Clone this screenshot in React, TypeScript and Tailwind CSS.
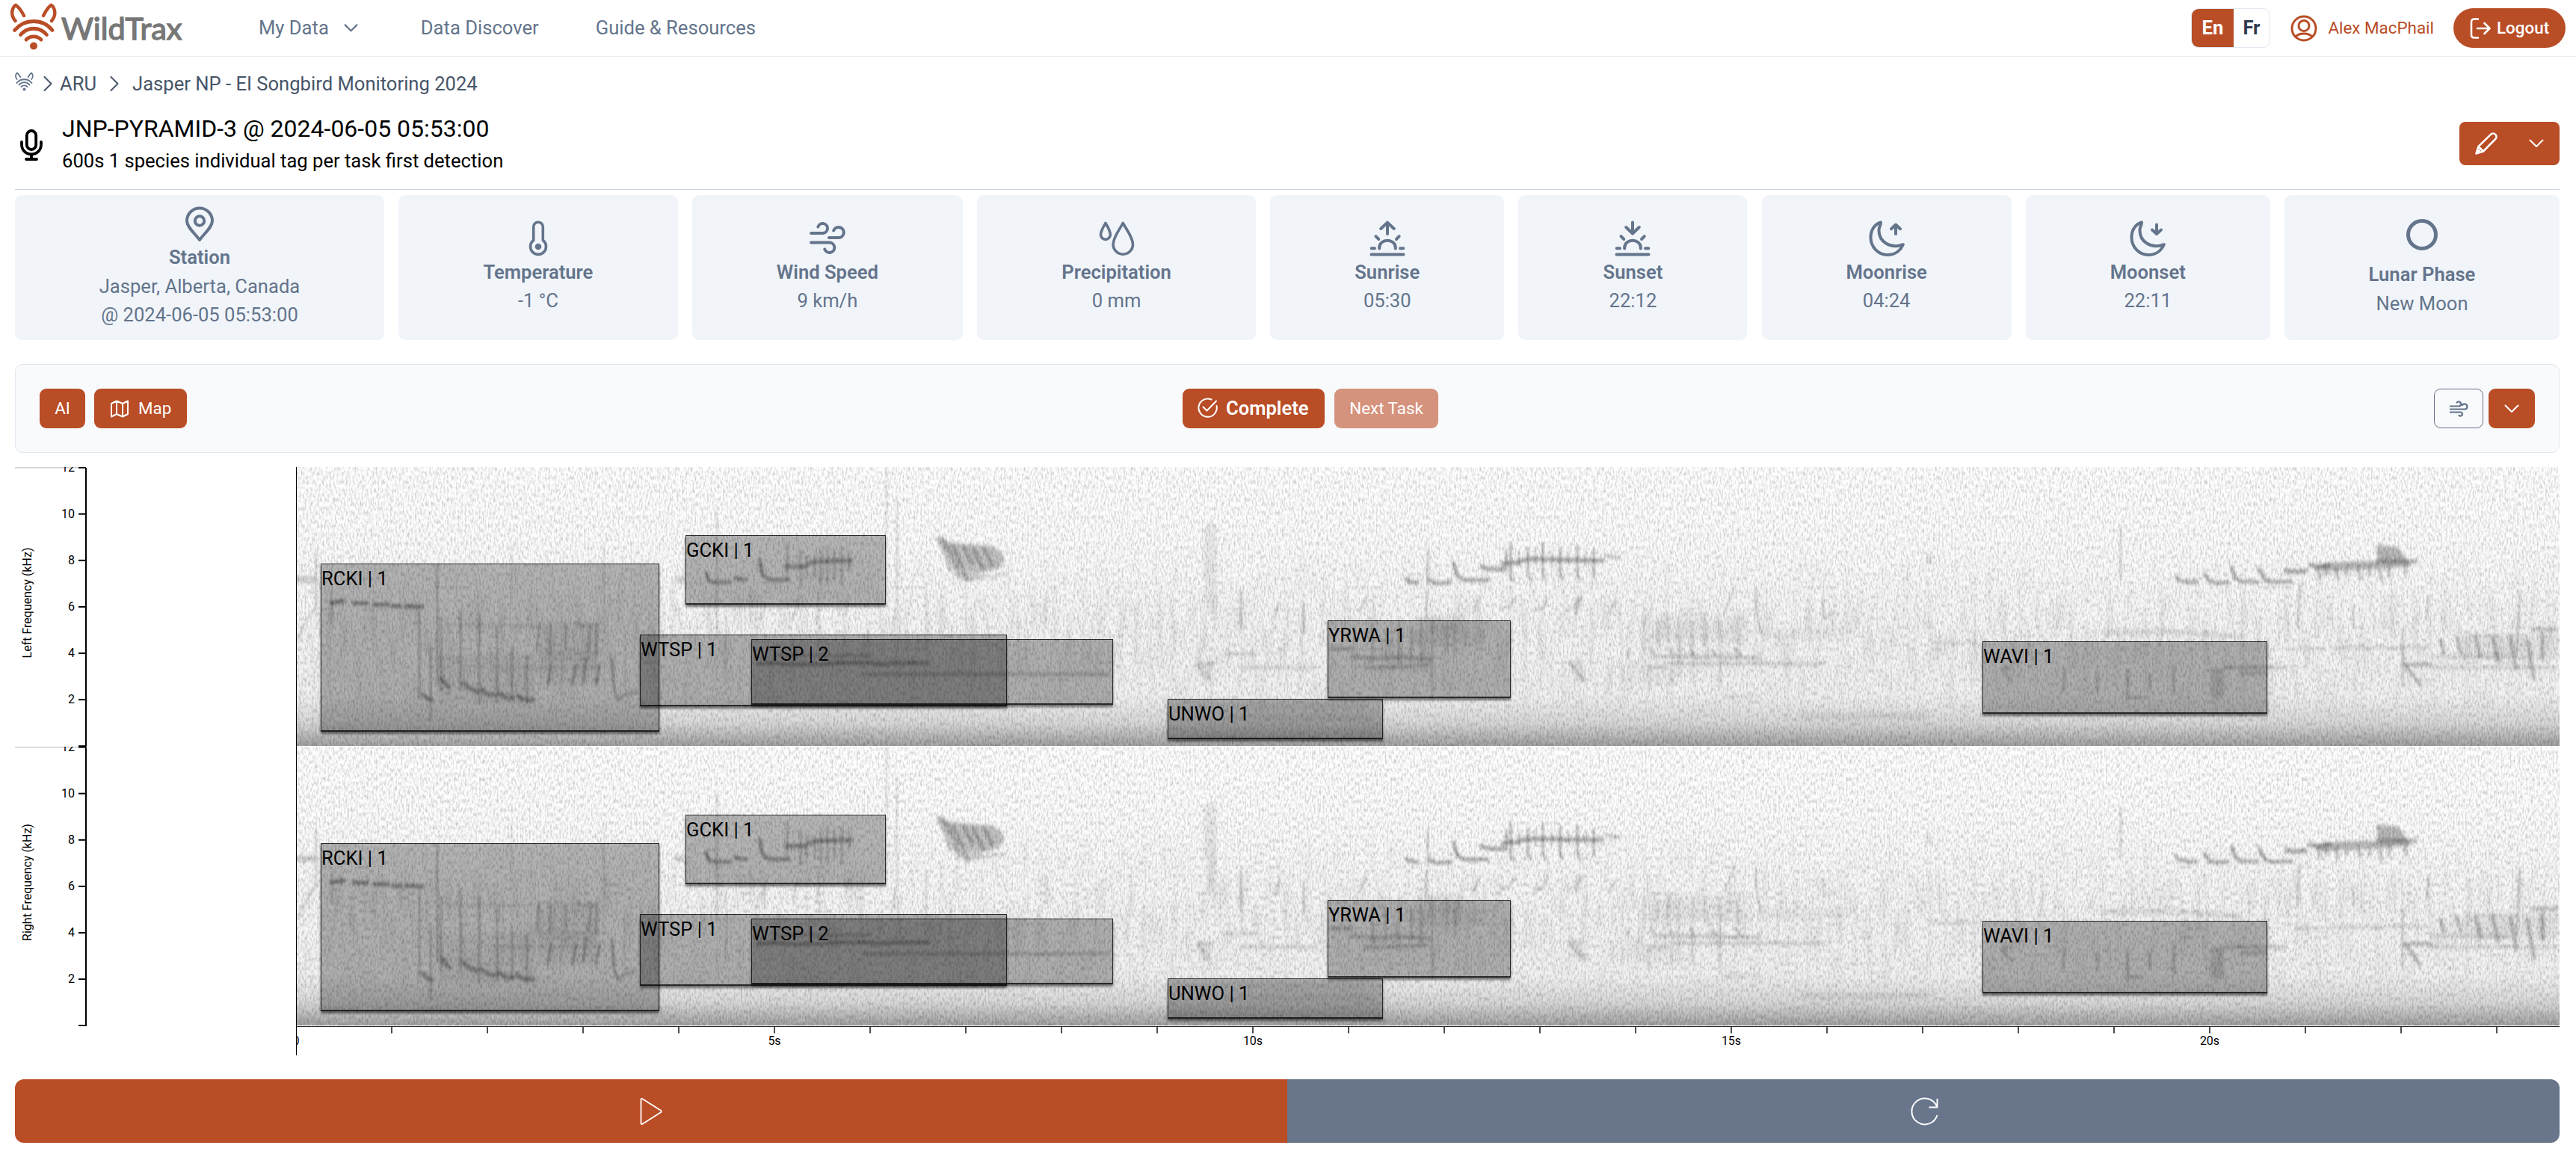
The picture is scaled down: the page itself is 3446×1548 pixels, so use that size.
import React from "react";

type IconProps = { className?: string };

const FoxMark = ({ className }: IconProps) => (
  <svg viewBox="14 3 62 65" className={className} fill="none" stroke="currentColor" strokeWidth="4.4" strokeLinecap="round" strokeLinejoin="round">
    <path d="M20.5 28C17 24 16 20 16.2 16.500C16.500 12 18 8.500 21 6.800C24 9 29 15 32 21" />
    <path d="M69 28C72.500 24 73.500 20 73.300 16.500C73 12 71.500 8.500 68.500 6.800C65.500 9 61 15 58 21" />
    <path d="M19.500 40.500C33 24.500 57 24.500 70 40.500" strokeWidth="4.800" />
    <path d="M27.500 46.500C37 35.500 53 35.500 62.500 46.500" strokeWidth="4.800" />
    <path d="M35 53C40.500 47.500 49.500 47.500 55 53" strokeWidth="4.800" />
    <circle cx="45" cy="61.500" r="5" fill="currentColor" stroke="none" />
  </svg>
);

const Chevron = ({ className, w = 2.6 }: IconProps & { w?: number }) => (
  <svg viewBox="0 0 20 12" className={className} fill="none" stroke="currentColor" strokeWidth={w} strokeLinecap="round" strokeLinejoin="round">
    <path d="M1.500 1.500L10 10L18.500 1.500" />
  </svg>
);

const ChevronRight = ({ className }: IconProps) => (
  <svg viewBox="0 0 12 20" className={className} fill="none" stroke="currentColor" strokeWidth="2" strokeLinecap="round" strokeLinejoin="round">
    <path d="M1.500 1L10.500 10L1.500 19" />
  </svg>
);

const Glyph = ({ children, className = "size-12" }: { children: React.ReactNode; className?: string }) => (
  <svg viewBox="0 0 48 48" className={className} fill="none" stroke="currentColor" strokeWidth="4" strokeLinecap="round" strokeLinejoin="round">
    {children}
  </svg>
);

const moon = <path d="M16 2.500C7.500 5 2.500 13 2.500 22.500C2.500 35.500 12.500 46 25 46C34 46 42 41 45.800 32.200C29 38.500 13 28.500 13.500 12.500C13.700 8.500 16.500 5 16 2.500Z" />;
const horizon = <path d="M2.500 45.500H45.500M13.200 37.500V36.500C13.200 23.500 34.800 23.500 34.800 36.500V37.500M2.700 37.200H7M41 37.200H45.300M8.500 21.200L12.300 25M39.700 21.200L36 25" />;

type Stat = { title: string; lines: string[]; icon: React.ReactNode };

const stats: Stat[] = [
  {
    title: "Station",
    lines: ["Jasper, Alberta, Canada", "@ 2024-06-05 05:53:00"],
    icon: (
      <Glyph>
        <path d="M24 45C17 35.500 7 28 7 19.500A17 17 0 0 1 41 19.500C41 28 31 35.500 24 45Z" />
        <circle cx="24" cy="19.500" r="6.200" />
      </Glyph>
    ),
  },
  {
    title: "Temperature",
    lines: ["-1 °C"],
    icon: (
      <Glyph>
        <path d="M17.700 8.500a6.300 6.300 0 0 1 12.600 0V26.500a10.500 10.500 0 1 1 -12.600 0Z" strokeWidth="3.600" />
        <circle cx="24" cy="35" r="4.300" fill="currentColor" stroke="none" />
      </Glyph>
    ),
  },
  {
    title: "Wind Speed",
    lines: ["9 km/h"],
    icon: (
      <Glyph>
        <path d="M2 17H17.500a6.500 6.500 0 1 0 -6.200 -8.500M26 23H38.500a7 7 0 1 0 -6.300 -9.500M2 29.500H26.500a6.700 6.700 0 1 1 -6.200 9" />
      </Glyph>
    ),
  },
  {
    title: "Precipitation",
    lines: ["0 mm"],
    icon: (
      <Glyph>
        <path d="M9 3.500C12 8.500 15.300 14 15.300 19a6.400 6.400 0 0 1 -12.800 0C2.500 14 6 8.500 9 3.500Z" strokeWidth="3.600" />
        <path d="M32.200 3.500C37.500 13 45.500 23 45.500 32a13.200 13.200 0 0 1 -26.400 0C19.100 23 27 13 32.200 3.500Z" strokeWidth="3.600" />
      </Glyph>
    ),
  },
  {
    title: "Sunrise",
    lines: ["05:30"],
    icon: (
      <Glyph>
        {horizon}
        <path d="M24 18V3M15.200 11L24 2.700L32.800 11" />
      </Glyph>
    ),
  },
  {
    title: "Sunset",
    lines: ["22:12"],
    icon: (
      <Glyph>
        {horizon}
        <path d="M24 2.500V17M15.200 9L24 17.500L32.800 9" />
      </Glyph>
    ),
  },
  {
    title: "Moonrise",
    lines: ["04:24"],
    icon: (
      <Glyph>
        {moon}
        <path d="M36 18V7M30 11.200L36 5.500L42 11.200" />
      </Glyph>
    ),
  },
  {
    title: "Moonset",
    lines: ["22:11"],
    icon: (
      <Glyph>
        {moon}
        <path d="M36 5.500V16M30 12.500L36 18L42 12.500" />
      </Glyph>
    ),
  },
  {
    title: "Lunar Phase",
    lines: ["New Moon"],
    icon: (
      <Glyph className="size-12 mb-2.5">
        <circle cx="24" cy="24" r="18.500" strokeWidth="5" />
      </Glyph>
    ),
  },
];

/* Tag regions: left, top, width and height inside a spectrogram panel. */
const tags = [
  { label: "RCKI | 1", left: 33, top: 129, width: 453, height: 225 },
  { label: "WTSP | 1", left: 460, top: 224, width: 491, height: 96 },
  { label: "GCKI | 1", left: 521, top: 91, width: 268, height: 93 },
  { label: "WTSP | 2", left: 609, top: 230, width: 484, height: 88 },
  { label: "UNWO | 1", left: 1166, top: 310, width: 288, height: 54 },
  { label: "YRWA | 1", left: 1380, top: 205, width: 245, height: 104 },
  { label: "WAVI | 1", left: 2256, top: 233, width: 381, height: 97 },
];

/* Bird calls: path, stroke width, opacity. Closed shapes are filled. */
const calls: [string, number, number][] = [
  ["M45 182L66 179M75 182H97M103 184H125M127 186H142M145 186L171 187", 4, 0.5],
  ["M48 165V210M60 180V172M2 230L14 205L24 190M27 110V190", 2, 0.22],
  ["M165 190V310M180 240V340M189 130V290M194 200V300M220 190V300M245 200V318M269 215V315M289 240V310M309 250V318", 2, 0.3],
  ["M194 282L200 290L206 296M222 287L232 296L244 301M246 297L256 304L268 306M270 302L280 308L292 310M294 304L302 310L320 312M168 303L176 310L184 312", 5, 0.36],
  ["M325 208L322 248M361 210V245M395 210L391 248M402 208V250M378 205V212H404M340 205V250", 2.5, 0.25],
  ["M341 263L337 293M375 263L369 293M407 263L401 292M422 255L426 300L431 312L440 304L456 301M388 255L384 290", 2.5, 0.36],
  ["M323 249H408M330 257H400M262 268H408M200 212H320", 4, 0.1],
  ["M325 208H405V290H325Z", 2, 0.05],
  ["M190 250H320V315H190Z", 2, 0.05],
  ["M412 100V250M288 100V190M462 220L458 290M355 180V310M480 200V290M440 220V300", 1.5, 0.16],
  ["M0 150H26M508 150H519", 8, 0.18],
  ["M548 140L552 152L560 154L583 154M586 146L592 150L604 151M620 122L624 145L634 151H661", 4, 0.4],
  ["M653 133H684M684 129L699 126M700 126L745 125", 5, 0.36],
  ["M675 110V160M683 118V150M694 118V150M702 110V155M711 105V158M720 112V150M730 108V158M657 100V150M740 112V140", 2.5, 0.24],
  ["M563 60V230M608 165V210M628 180L622 205M672 175L664 205M740 175L734 200M700 165L696 210", 2, 0.2],
  ["M790 0V90M804 40V185L795 225M843 165V225M1003 175V210M575 190V290M700 190V225", 1.6, 0.2],
  ["M858 94L870 120L876 140M864 94L876 122L884 142M868 100L882 130L888 150M878 104L894 140L898 152M892 105L906 130M905 108L920 138M920 108L932 132", 5, 0.22],
  ["M858 92L872 100L910 104L930 105L942 112L948 124L940 136L912 142L884 132Z", 4, 0.24],
  ["M874 128L900 138L922 146L902 152L894 152L884 138Z", 4, 0.16],
  ["M895 152L925 147L950 143", 3, 0.18],
  ["M616 264L640 262L660 264H700L720 262H770L780 264L800 262L848 262", 3.5, 0.4],
  ["M757 277H1088M640 252H770", 3.5, 0.24],
  ["M1204 262L1214 275L1224 286M1204 263H1228M1262 268H1366M1240 250H1285M1702 261L1712 272L1724 286M1702 261H1722", 3.5, 0.17],
  ["M1204 262H1228L1222 288H1214Z", 2, 0.07],
  ["M1702 262H1720L1730 288H1714Z", 2, 0.07],
  ["M1411 253L1440 256L1480 254L1519 257M1428 268H1470L1515 265M1382 243H1415", 4, 0.24],
  ["M1440 210V262M1458 215V262M1475 200V265M1492 215V262M1505 200V262M1520 200V310M1540 205V250M1550 210V255", 3, 0.16],
  ["M1515 208H1560", 22, 0.06],
  ["M1490 228H1590", 22, 0.06],
  ["M1216 80V150", 6, 0.05],
  ["M1225 75V195", 14, 0.07],
  ["M1264 165V218M1315 180L1310 200M1348 180V225M1432 173L1422 195M1513 165L1511 210M1514 110V160M1583 175L1575 195", 2.2, 0.28],
  ["M1631 174L1624 186L1610 190M1674 175L1668 188L1655 192M1716 174L1710 188L1700 192M1766 178L1756 196M1720 172L1712 196", 2.4, 0.26],
  ["M1485 148L1488 153L1502 155M1515 150L1525 156L1546 154M1548 127L1554 146L1562 151H1596", 4, 0.4],
  ["M1584 132L1592 136L1620 137M1612 130L1622 128H1638M1634 126L1650 123L1750 125", 5, 0.36],
  ["M1619 110V135M1625 100V150L1630 152M1648 108V145L1653 152M1668 102V145L1673 152M1691 106V145L1696 150M1714 104V145L1720 152M1736 110V148M1750 118L1772 122", 3, 0.3],
  ["M1636 112V132M1658 110V132M1680 112V132M1702 112V132M1725 112V132", 2.5, 0.2],
  ["M1782 245V253M1811 241L1817 253M1838 243L1843 253M1865 244L1871 254M1893 244L1902 254M1926 244L1934 254M1817 253L1960 255", 3.5, 0.24],
  ["M1838 263H2046M1810 268H1835", 3, 0.22],
  ["M1803 200V245M1822 205V240M1835 195V240M1850 200V280M1868 205V290M1885 200V240M1905 205V295M1930 195V240M1810 265V305M1840 265V290M1760 262V290M1775 265V290", 3, 0.11],
  ["M1953 162V190L1960 225M2043 175V200L2060 194M2183 115V130M2187 122V130M2441 80V150M1910 195L1925 160", 2.2, 0.22],
  ["M1800 215H1945", 40, 0.03],
  ["M1815 218H1930", 26, 0.03],
  ["M1780 275H1850", 34, 0.03],
  ["M1960 222H2080", 16, 0.04],
  ["M2012 333H2183", 9, 0.07],
  ["M1910 307H1960M2190 235H2250", 4, 0.1],
  ["M2415 221L2500 220L2604 227", 7, 0.1],
  ["M2514 146L2518 151L2530 154H2544M2552 142L2560 153L2570 155L2586 154M2589 132L2594 148L2602 153L2626 154M2625 135L2634 151L2644 154L2671 153", 4, 0.38],
  ["M2660 138L2672 140L2690 139M2692 131L2705 133L2722 130", 5, 0.38],
  ["M2700 134L2722 128L2750 126H2786V136L2740 138L2712 140Z", 2, 0.28],
  ["M2782 126L2838 126", 6, 0.26],
  ["M2783 104L2812 107L2824 124L2830 132L2790 136L2784 120Z", 3, 0.28],
  ["M2704 135L2708 150M2716 136V146M2728 135L2732 150M2743 136V146M2758 135L2762 150M2774 135V146M2786 130L2790 152M2800 132V148M2822 130V146", 5, 0.2],
  ["M2681 155L2677 215M2853 172L2850 205M2975 165L2970 255M2752 185V215M2818 215V295", 2.2, 0.26],
  ["M2674 243H2715M2720 242L2853 241", 3, 0.18],
  ["M2281 268H2296L2282 270L2296 288M2366 268L2364 300M2410 275V302M2450 270V312M2450 308H2470M2480 275V298M2512 265V305", 4, 0.17],
  ["M2570 268V310", 18, 0.12],
  ["M2578 268H2664M2600 276H2637", 4, 0.2],
  ["M2818 264H2858M2822 266L2832 278L2842 293", 4, 0.3],
  ["M2853 268H3026M2855 254H2960", 3.5, 0.16],
  ["M2868 230L2874 250M2890 226L2896 250M2915 224L2922 255M2938 224L2946 262M2962 226L2970 272M2985 230L2994 285M3005 222V260M2990 217H3026", 5, 0.24],
  ["M2900 240H3026", 34, 0.07],
  ["M1170 320H1430M1240 335H1440", 8, 0.05],
];

const Spectrogram = ({ id, seed }: { id: string; seed: number }) => (
  <svg className="block h-[373px] w-[3028px]" viewBox="0 0 3028 373">
    <defs>
      <linearGradient id={`${id}-floor`} x1="0" y1="0" x2="0" y2="1">
        <stop offset="0" stopColor="#ffffff" />
        <stop offset="0.35" stopColor="#fbfbfb" />
        <stop offset="0.6" stopColor="#f5f5f5" />
        <stop offset="0.82" stopColor="#f2f2f2" />
        <stop offset="0.92" stopColor="#d6d6d6" />
        <stop offset="1" stopColor="#9c9c9c" />
      </linearGradient>
      <linearGradient id={`${id}-band`} x1="0" y1="0" x2="0" y2="1">
        <stop offset="0.25" stopColor="#fff" stopOpacity="0" />
        <stop offset="0.6" stopColor="#fff" stopOpacity="1" />
        <stop offset="0.9" stopColor="#fff" stopOpacity="0.2" />
      </linearGradient>
      <mask id={`${id}-mid`}>
        <rect width="3028" height="373" fill={`url(#${id}-band)`} />
      </mask>
      <filter id={`${id}-grain`} x="0" y="0" width="100%" height="100%" colorInterpolationFilters="sRGB">
        <feTurbulence type="fractalNoise" baseFrequency="0.42 0.17" numOctaves="2" seed={seed} />
        <feColorMatrix values="0 0 0 0 0  0 0 0 0 0  0 0 0 0 0  0.46 0 0 0 -0.185" />
      </filter>
      <filter id={`${id}-light`} x="0" y="0" width="100%" height="100%" colorInterpolationFilters="sRGB">
        <feTurbulence type="fractalNoise" baseFrequency="0.4 0.16" numOctaves="2" seed={seed + 7} />
        <feColorMatrix values="0 0 0 0 1  0 0 0 0 1  0 0 0 0 1  0.9 0 0 0 -0.38" />
      </filter>
      <filter id={`${id}-streaks`} x="0" y="0" width="100%" height="100%" colorInterpolationFilters="sRGB">
        <feTurbulence type="fractalNoise" baseFrequency="0.1 0.018" numOctaves="3" seed={seed + 3} />
        <feColorMatrix values="0 0 0 0 0  0 0 0 0 0  0 0 0 0 0  0.22 0 0 0 -0.09" />
      </filter>
      <filter id={`${id}-soft`} x="-5%" y="-5%" width="110%" height="110%">
        <feGaussianBlur stdDeviation="1.5 1.9" />
      </filter>
    </defs>
    <rect width="3028" height="373" fill={`url(#${id}-floor)`} />
    <g mask={`url(#${id}-mid)`}>
      <rect width="3028" height="373" filter={`url(#${id}-streaks)`} />
    </g>
    <g filter={`url(#${id}-soft)`} stroke="#000" strokeLinejoin="round">
      {calls.map(([d, width, opacity], i) => (
        <path key={i} d={d} fill={d.endsWith("Z") ? "#000" : "none"} fillOpacity={opacity} strokeWidth={width} strokeOpacity={d.endsWith("Z") ? 0 : opacity} />
      ))}
    </g>
    <rect width="3028" height="373" filter={`url(#${id}-grain)`} />
    <rect width="3028" height="373" filter={`url(#${id}-light)`} opacity="0.6" />
  </svg>
);

const FrequencyAxis = ({ side }: { side: string }) => (
  <svg className="block h-[374px] w-[376px] shrink-0 overflow-hidden" viewBox="0 0 376 374">
    <path d="M0 0.500H95" stroke="#cfcfcf" strokeWidth="2" />
    <path d="M95 1V374" stroke="#000" strokeWidth="2" />
    {[0, 2, 4, 6, 8, 10, 12].map((khz) => {
      const y = 373.2 - khz * 31.05;
      return (
        <g key={khz}>
          <path d={`M85 ${y}H95`} stroke="#000" strokeWidth="2" />
          {khz > 0 && (
            <text x="80" y={y + 5} textAnchor="end" fontSize="16">
              {khz}
            </text>
          )}
        </g>
      );
    })}
    <text transform="translate(22 181.500) rotate(-90)" textAnchor="middle" fontSize="16">
      {side} Frequency (kHz)
    </text>
  </svg>
);

const Panel = ({ side, seed }: { side: string; seed: number }) => (
  <div className="flex h-[374px]">
    <FrequencyAxis side={side} />
    <div className="relative h-[373px] w-[3028px] overflow-hidden">
      <Spectrogram id={side} seed={seed} />
      {tags.map((tag) => (
        <div
          key={tag.label}
          className="absolute border-[1.5px] border-b-2 border-black/75 bg-black/[0.28] text-[25.6px] leading-[38px] whitespace-nowrap shadow-[0_3px_3px_rgba(0,0,0,0.5)]"
          style={{ left: tag.left, top: tag.top, width: tag.width, height: tag.height }}
        >
          {tag.label}
        </div>
      ))}
    </div>
  </div>
);

const TimeAxis = () => (
  <svg className="ml-[376px] block h-10 w-[3028px] overflow-hidden" viewBox="0 0 3028 40">
    <path d="M0 0H3028" stroke="#222" strokeWidth="2" />
    {Array.from({ length: 24 }, (_, s) => (
      <g key={s}>
        {s > 0 && <path d={`M${s * 128} 0V9.500`} stroke="#222" strokeWidth="1.600" />}
        {s % 5 === 0 && (
          <text x={s * 128} y="25" textAnchor="middle" fontSize="16">
            {s === 0 ? "0" : `${s}s`}
          </text>
        )}
      </g>
    ))}
  </svg>
);

export default function App() {
  return (
    <div className="h-[1548px] w-[3446px] overflow-hidden bg-white font-['Roboto',sans-serif] text-[25.6px] leading-[38.4px] text-black">
      <header className="flex h-[76px] items-center border-b border-[#ececec] pr-[14px] pl-[14px] text-[#64748b]">
        <div className="flex w-[332px] items-center">
          <FoxMark className="-mt-1 h-[65px] w-[62px] text-[#b94d26]" />
          <span className="ml-1.5 font-['Lato',sans-serif] text-[41.5px] leading-none text-[#777] [-webkit-text-stroke:1.4px_#777]">WildTrax</span>
        </div>
        <nav className="flex items-center whitespace-nowrap">
          <span>My Data</span>
          <Chevron className="ml-[20px] h-[11px] w-[19px]" w={2.4} />
          <span className="ml-[84px]">Data Discover</span>
          <span className="ml-[76px]">Guide &amp; Resources</span>
        </nav>
        <div className="ml-auto flex items-center text-[22.4px] whitespace-nowrap text-[#b94d26]">
          <div className="flex h-[53px] w-[106px] overflow-hidden rounded-[10px] border border-[#e2e8f0] text-[25.6px] font-bold">
            <span className="-m-px flex w-[57px] items-center justify-center bg-[#b94d26] text-white">En</span>
            <span className="flex flex-1 items-center justify-center text-[#2f3a4c]">Fr</span>
          </div>
          <svg viewBox="0 0 36 36" className="ml-[27px] size-9" fill="none" stroke="currentColor" strokeWidth="3">
            <circle cx="18" cy="18" r="16" />
            <circle cx="18" cy="14.500" r="7" />
            <path d="M7 29C11 23.500 25 23.500 29 29" />
          </svg>
          <span className="ml-[14px]">Alex MacPhail</span>
          <button className="ml-[26px] flex h-[53px] w-[150px] items-center rounded-full bg-[#b94d26] pl-[22px] font-medium text-white">
            <svg viewBox="0 0 28 28" className="size-7" fill="none" stroke="currentColor" strokeWidth="2.600" strokeLinecap="round" strokeLinejoin="round">
              <path d="M11 1.500H6Q2 1.500 2 5.500V22.500Q2 26.500 6 26.500H11M10 14H26M19.500 7L26.500 14L19.500 21" />
            </svg>
            <span className="ml-[8px]">Logout</span>
          </button>
        </div>
      </header>

      <main className="px-[20px] pr-[22px]">
        <div className="flex h-[72px] items-center text-[#475569]">
          <FoxMark className="-mt-1.5 h-[26px] w-[25px] text-[#64748b]" />
          <ChevronRight className="ml-[13px] h-5 w-3" />
          <span className="ml-[10px]">ARU</span>
          <ChevronRight className="ml-[18px] h-5 w-3" />
          <span className="ml-[18px]">Jasper NP - EI Songbird Monitoring 2024</span>
        </div>

        <div className="flex h-[106px] border-b border-[#cbd5e1]">
          <svg viewBox="0 0 32 44" className="mt-[24px] ml-[6px] h-[44px] w-[32px]" fill="none" stroke="currentColor" strokeWidth="3.800" strokeLinecap="round" strokeLinejoin="round">
            <rect x="9.800" y="3" width="12.400" height="25" rx="6.200" />
            <path d="M3 18V21.500A13 13 0 0 0 29 21.500V18M16 35V41M9 41H23" />
          </svg>
          <div className="ml-[25px]">
            <h1 className="text-[32px] leading-[48px]">JNP-PYRAMID-3 @ 2024-06-05 05:53:00</h1>
            <p>600s 1 species individual tag per task first detection</p>
          </div>
          <div className="mt-[15px] ml-auto flex h-[58px] w-[134px] items-center rounded-lg bg-[#b94d26] text-white">
            <svg viewBox="0 0 30 30" className="ml-[21px] size-[30px]" fill="none" stroke="currentColor" strokeWidth="2.500" strokeLinecap="round" strokeLinejoin="round">
              <path d="M1.500 28.500L4.500 19L21 2.800A4.300 4.300 0 0 1 27.200 9L11 25.500ZM4.500 19L11 25.500M6 24L3 27" />
            </svg>
            <Chevron className="ml-[42px] h-[12px] w-[20px]" w={2} />
          </div>
        </div>

        <section className="mt-[7px] grid h-[194px] grid-cols-[494fr_373.5fr_362fr_373fr_313fr_306fr_334fr_327fr_368fr] gap-[19.2px] text-[#64748b]">
          {stats.map((stat) => (
            <div key={stat.title} className="flex flex-col items-center justify-center rounded-[9px] bg-[#f1f5fa] pb-px whitespace-nowrap">
              <div className="flex min-h-[51.2px] items-center">{stat.icon}</div>
              <div className="font-semibold">{stat.title}</div>
              {stat.lines.map((line) => (
                <div key={line}>{line}</div>
              ))}
            </div>
          ))}
        </section>

        <section className="mt-8 flex h-[119px] items-center rounded-[10px] border border-[#e2e8f0] bg-[#f8fafc] px-[32px] text-[22.4px] whitespace-nowrap text-white">
          <div className="flex flex-1 gap-3">
            <button className="h-[53px] w-[61px] rounded-[9px] bg-[#b94d26]">AI</button>
            <button className="flex h-[53px] w-[124px] items-center rounded-[9px] bg-[#b94d26] pl-[22px]">
              <svg viewBox="0 0 24 24" className="size-6" fill="none" stroke="currentColor" strokeWidth="2" strokeLinejoin="round">
                <path d="M1 5L8 1.500L16 5L23 1.500V19L16 22.500L8 19L1 22.500ZM8 1.500V19M16 5V22.500" />
              </svg>
              <span className="ml-[13px]">Map</span>
            </button>
          </div>
          <div className="flex gap-[13px] pl-[62px]">
            <button className="flex h-[53px] w-[190px] items-center rounded-[9px] bg-[#b94d26] pl-[20px] text-[25.6px] font-semibold">
              <svg viewBox="0 0 27 27" className="-mt-0.5 size-[27px]" fill="none" stroke="currentColor" strokeWidth="2" strokeLinecap="round" strokeLinejoin="round">
                <path d="M25.500 11A12.200 12.200 0 1 1 18.500 2.500M7.500 12.500L12.500 17.500L25 4.500" />
              </svg>
              <span className="ml-[11px]">Complete</span>
            </button>
            <button className="h-[53px] w-[139px] rounded-[9px] bg-[#d5937d]">Next Task</button>
          </div>
          <div className="flex flex-1 justify-end gap-[7px]">
            <button className="flex h-[53px] w-[66px] items-center justify-center rounded-[9px] border border-[#64748b] text-[#64748b]">
              <svg viewBox="0 0 26 22" className="h-[22px] w-[26px]" fill="none" stroke="currentColor" strokeWidth="2.200">
                <path d="M1 7.500H13a3 3 0 1 0 -2.800 -4M1 11.500H21a3.500 3.500 0 1 0 -3.400 -4.500M1 15.500H15.500a2.500 2.500 0 1 1 -2.300 3.500" />
              </svg>
            </button>
            <button className="flex h-[53px] w-[62px] items-center justify-center rounded-[9px] bg-[#b94d26]">
              <Chevron className="h-[12px] w-[20px]" w={2} />
            </button>
          </div>
        </section>

        <section className="mt-[19px] flex">
          <div className="relative">
            <Panel side="Left" seed={3} />
            <Panel side="Right" seed={11} />
            <TimeAxis />
            <div className="absolute top-0 left-[376px] h-[787px] w-px bg-black" />
          </div>
        </section>

        <div className="mt-[31px] flex h-[85px] overflow-hidden rounded-[12px] text-white">
          <button className="flex flex-1 items-center justify-center bg-[#b94d26]">
            <svg viewBox="0 0 30 38" className="h-[38px] w-[30px]" fill="none" stroke="currentColor" strokeWidth="1.800" strokeLinejoin="round">
              <path d="M1.500 3.200Q1.500 1 3.500 2.200L28 17.800Q29.500 19 28 20.200L3.500 35.800Q1.500 37 1.500 34.800Z" />
            </svg>
          </button>
          <button className="flex flex-1 items-center justify-center bg-[#68758b]">
            <svg viewBox="0 0 40 40" className="ml-[3px] size-10" fill="none" stroke="currentColor" strokeWidth="2">
              <path d="M36.500 3V14.500H25.500M36.200 14A17.400 17.400 0 1 0 36.500 25" />
            </svg>
          </button>
        </div>
      </main>
    </div>
  );
}
